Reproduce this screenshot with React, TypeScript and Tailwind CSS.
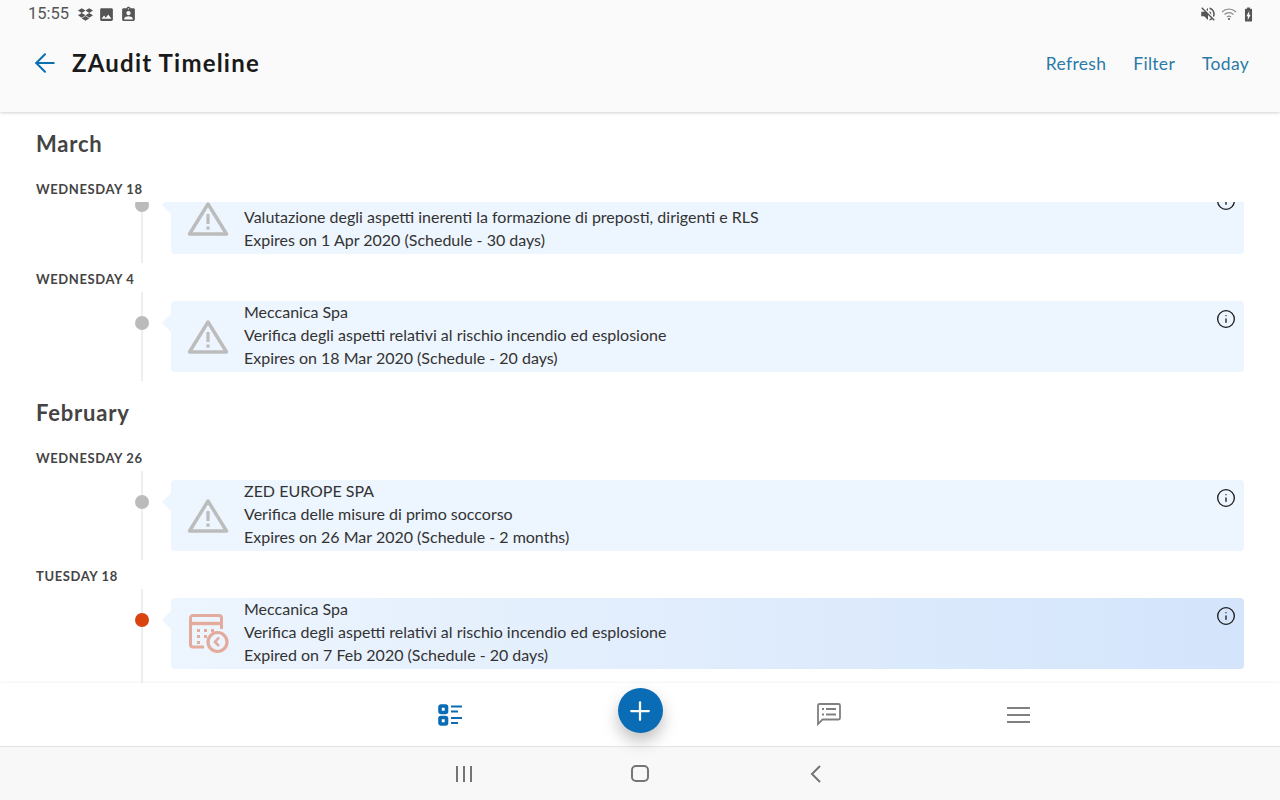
import { ArrowLeft, Plus, Info } from "lucide-react";
import { FaDropbox } from "react-icons/fa";
import { MdImage, MdAssignmentInd, MdVolumeOff, MdBatteryChargingFull } from "react-icons/md";

const font = "font-['Lato','Noto_Sans',sans-serif]";

function WarningIcon() {
  return (
    <svg width="42" height="36" viewBox="0 0 42 36" fill="none">
      <path d="M21 3 L39.5 33 H2.5 Z" stroke="#bcbcbc" strokeWidth="3.4" strokeLinejoin="round" />
      <rect x="19.4" y="13" width="3.2" height="10" fill="#bcbcbc" />
      <rect x="19.4" y="25.5" width="3.2" height="3.2" fill="#bcbcbc" />
    </svg>
  );
}

function OverdueIcon() {
  return (
    <svg width="40" height="40" viewBox="0 0 40 40" fill="none" stroke="#e2ab9c" strokeWidth="3" className="ml-[3px]">
      <path d="M15 33 H4 a2.5 2.5 0 0 1 -2.5 -2.5 V4 A2.5 2.5 0 0 1 4 1.5 H30 a2.5 2.5 0 0 1 2.5 2.5 V15" />
      <path d="M1.5 9.5 H32.5" strokeWidth="3.4" />
      <path d="M8 16.5h3M15 16.5h3M22 16.5h3M8 22.5h3M15 22.5h3M8 28.5h3" strokeWidth="3" />
      <circle cx="28.5" cy="28" r="9.5" strokeWidth="3.2" />
      <path d="M30 23.5 L26 28 L30 32" strokeWidth="2.6" />
    </svg>
  );
}

type Item = {
  title: string;
  desc: string;
  expiry: string;
  overdue?: boolean;
};

function TimelineRow({ item }: { item: Item }) {
  return (
    <div className={`flex pl-[141px] pr-[36px] ${item.overdue ? "h-[94px]" : "h-[89px]"}`}>
      <div className="relative w-[2px] bg-[#eeeeee]">
        <div
          className={`absolute left-[-6px] top-[24px] h-[14px] w-[14px] rounded-full ${
            item.overdue ? "bg-[#d9430f]" : "bg-[#bbbbbb]"
          }`}
        />
      </div>
      <div
        className={`relative ml-[28px] mt-[9px] flex h-[71px] flex-1 rounded-[4px] ${
          item.overdue ? "bg-gradient-to-r from-[#edf5fe] to-[#d3e4fb]" : "bg-[#edf5fe]"
        }`}
      >
        <div className="absolute left-[-9px] top-[13px] h-0 w-0 border-y-[9px] border-r-[9px] border-y-transparent border-r-[#edf5fe]" />
        <div className="flex w-[73px] items-center justify-center pt-[1px]">
          {item.overdue ? <OverdueIcon /> : <WarningIcon />}
        </div>
        <div className="mt-[-1px] flex-1 text-[16px] leading-[23px] text-[#333333]">
          <div className="min-h-[23px]">{item.title}</div>
          <div>{item.desc}</div>
          <div>{item.expiry}</div>
        </div>
        <Info size={20} strokeWidth={1.6} className="mr-[8px] mt-[8px] text-[#1a1a1a]" />
      </div>
    </div>
  );
}

function DayLabel({ text }: { text: string }) {
  return (
    <div className="h-[29px] pl-[36px] pt-[8px] text-[13px] font-bold leading-[16px] tracking-[0.6px] text-[#444444]">
      {text}
    </div>
  );
}

function Month({ text }: { text: string }) {
  return (
    <div className="h-[61px] pl-[36px] pt-[17px] text-[22px] font-bold leading-[30px] tracking-[0.8px] text-[#444444]">
      {text}
    </div>
  );
}

export default function App() {
  return (
    <div className={`flex h-[800px] w-[1280px] flex-col overflow-hidden bg-white ${font}`}>
      <header className="z-10 h-[112px] shrink-0 bg-[#fafafa] shadow-[0_1px_3px_rgba(0,0,0,0.18)]">
        <div className="flex h-[28px] items-center justify-between pl-[28px] pr-[23px]">
          <div className="flex items-center text-[#555555]">
            <span className="mr-[8px] w-[42px] font-['Roboto',sans-serif] text-[16.5px] text-[#555555]">15:55</span>
            <FaDropbox size={15} className="mr-[5px]" />
            <MdImage size={17} className="mr-[5px]" />
            <MdAssignmentInd size={17} />
          </div>
          <div className="flex items-center text-[#555555]">
            <MdVolumeOff size={18} className="mr-[4px]" />
            <svg width="17" height="15" viewBox="0 0 17 15" fill="none" stroke="#8a8a8a" strokeWidth="1.1" className="mr-[2px]">
              <path d="M1 5 C5 1 11 1 15 5" />
              <path d="M3.5 7.5 C6 5 10 5 12.5 7.5" />
              <path d="M6 10 C7.2 8.8 8.8 8.8 10 10" />
              <circle cx="8" cy="12" r="1" fill="#555555" stroke="none" />
            </svg>
            <MdBatteryChargingFull size={17} />
          </div>
        </div>
        <div className="mt-[10px] flex h-[50px] items-center pl-[30px] pr-[31px]">
          <ArrowLeft size={30} strokeWidth={1.6} className="mr-[12px] text-[#0a6fb0]" />
          <h1 className="flex-1 text-[24px] font-bold tracking-[1.2px] text-[#1a1a1a]">ZAudit Timeline</h1>
          <div className="flex gap-[27px] pt-[2px] text-[17.5px] tracking-[0.3px] text-[#2a7aa8]">
            <span>Refresh</span>
            <span>Filter</span>
            <span>Today</span>
          </div>
        </div>
      </header>

      <main className="min-h-0 flex-1 overflow-hidden">
        <Month text="March" />
        <DayLabel text="WEDNESDAY 18" />
        <div className="h-[61px] overflow-hidden">
          <div className="mt-[-28px]">
            <TimelineRow
              item={{
                title: "",
                desc: "Valutazione degli aspetti inerenti la formazione di preposti, dirigenti e RLS",
                expiry: "Expires on 1 Apr 2020 (Schedule - 30 days)",
              }}
            />
          </div>
        </div>
        <DayLabel text="WEDNESDAY 4" />
        <TimelineRow
          item={{
            title: "Meccanica Spa",
            desc: "Verifica degli aspetti relativi al rischio incendio ed esplosione",
            expiry: "Expires on 18 Mar 2020 (Schedule - 20 days)",
          }}
        />
        <Month text="February" />
        <DayLabel text="WEDNESDAY 26" />
        <TimelineRow
          item={{
            title: "ZED EUROPE SPA",
            desc: "Verifica delle misure di primo soccorso",
            expiry: "Expires on 26 Mar 2020 (Schedule - 2 months)",
          }}
        />
        <DayLabel text="TUESDAY 18" />
        <TimelineRow
          item={{
            title: "Meccanica Spa",
            desc: "Verifica degli aspetti relativi al rischio incendio ed esplosione",
            expiry: "Expired on 7 Feb 2020 (Schedule - 20 days)",
            overdue: true,
          }}
        />
      </main>

      <nav className="z-10 flex h-[63px] shrink-0 items-center bg-white pl-[355px] shadow-[0_-1px_2px_rgba(0,0,0,0.05)]">
        <div className="flex w-[190px] justify-center">
          <svg width="25" height="22" viewBox="0 0 25 22" fill="none" stroke="#0a6cb5">
            <rect x="2" y="2" width="6.5" height="6.5" rx="1" strokeWidth="3.6" />
            <rect x="2" y="13.5" width="6.5" height="6.5" rx="1" strokeWidth="3.6" />
            <path d="M13 2.5h11M13 7.5h7M13 14h11M13 19h7" strokeWidth="2.2" />
          </svg>
        </div>
        <div className="mb-[8px] flex w-[190px] justify-center">
          <div className="flex h-[45px] w-[45px] items-center justify-center rounded-full bg-[#0a6cb5] text-white shadow-[0_8px_16px_rgba(0,0,0,0.25)]">
            <Plus size={30} strokeWidth={1.8} />
          </div>
        </div>
        <div className="flex w-[188px] justify-center">
          <svg width="24" height="23" viewBox="0 0 24 23" fill="none" stroke="#808080">
            <path d="M1 21 V2.5 A1.5 1.5 0 0 1 2.5 1 H21.5 A1.5 1.5 0 0 1 23 2.5 V15 A1.5 1.5 0 0 1 21.5 16.5 H5.5 Z" strokeWidth="1.8" />
            <path d="M5 6h2M5 11.5h2M9 6h10M9 11.5h10" strokeWidth="1.8" />
          </svg>
        </div>
        <div className="flex w-[190px] justify-center">
          <div className="flex w-[23px] flex-col gap-[5px]">
            <div className="h-[2px] bg-[#808080]" />
            <div className="h-[2px] bg-[#808080]" />
            <div className="h-[2px] bg-[#808080]" />
          </div>
        </div>
      </nav>

      <footer className="flex h-[54px] shrink-0 items-center justify-center border-t border-[#e4e4e4] bg-[#f8f8f8]">
        <div className="flex w-[176px] justify-center gap-[5px]">
          <div className="h-[16px] w-[2px] bg-[#757575]" />
          <div className="h-[16px] w-[2px] bg-[#757575]" />
          <div className="h-[16px] w-[2px] bg-[#757575]" />
        </div>
        <div className="flex w-[176px] justify-center">
          <div className="h-[17px] w-[18px] rounded-[5px] border-2 border-[#757575]" />
        </div>
        <div className="flex w-[176px] justify-center">
          <svg width="12" height="18" viewBox="0 0 12 18" fill="none" stroke="#757575" strokeWidth="2">
            <path d="M10 1 L2 9 L10 17" />
          </svg>
        </div>
      </footer>
    </div>
  );
}
